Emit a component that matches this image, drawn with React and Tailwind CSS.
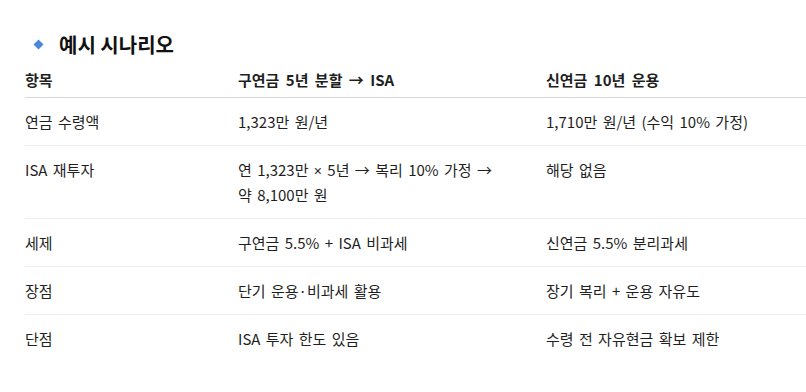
const rows = [
  ["연금 수령액", "1,323만 원/년", "1,710만 원/년 (수익 10% 가정)"],
  [
    "ISA 재투자",
    <>
      연 1,323만 <span className="font-['Liberation_Sans'] text-[14px] leading-[10px]">×</span> 5년 → 복리 10% 가정 →<br />약 8,100만 원
    </>,
    "해당 없음",
  ],
  ["세제", "구연금 5.5% + ISA 비과세", "신연금 5.5% 분리과세"],
  ["장점", "단기 운용·비과세 활용", "장기 복리 + 운용 자유도"],
  ["단점", "ISA 투자 한도 있음", "수령 전 자유현금 확보 제한"],
];

export default function App() {
  return (
    <div
      className="w-[806px] h-[392px] overflow-hidden bg-white text-[#1f1f1f]"
      style={{ fontFamily: '"Noto Sans CJK KR", "Noto Sans", sans-serif' }}
    >
      <div className="flex items-center pl-[33px] pt-[32px] h-[57px]">
        <svg width="11" height="11" viewBox="0 0 11 11" className="mr-[15px]">
          <path d="M5.5 0.5 L10.5 5.5 L5.5 10.5 L0.5 5.5 Z" fill="#4a88d9" />
        </svg>
        <h2 className="text-[20px] font-bold leading-[26px] text-[#111]">예시 시나리오</h2>
      </div>
      <table className="ml-[25px] w-[800px] table-fixed border-collapse text-[15px] leading-[25px] mt-[5px] [word-spacing:2px]">
        <colgroup>
          <col className="w-[213px]" />
          <col className="w-[308px]" />
          <col />
        </colgroup>
        <thead>
          <tr className="border-b border-[#d6d6d6]">
            <th className="text-left font-bold py-[5px] pr-3 align-top [word-spacing:3px]">항목</th>
            <th className="text-left font-bold py-[5px] pr-3 align-top [word-spacing:3px]">구연금 5년 분할 → ISA</th>
            <th className="text-left font-bold py-[5px] pr-3 align-top [word-spacing:3px]">신연금 10년 운용</th>
          </tr>
        </thead>
        <tbody>
          {rows.map((r, i) => (
            <tr key={i} className={i < rows.length - 1 ? "border-b border-[#efefef]" : ""}>
              {r.map((c, j) => (
                <td key={j} className="py-[11px] pr-3 align-top whitespace-nowrap">
                  {c}
                </td>
              ))}
            </tr>
          ))}
        </tbody>
      </table>
    </div>
  );
}
